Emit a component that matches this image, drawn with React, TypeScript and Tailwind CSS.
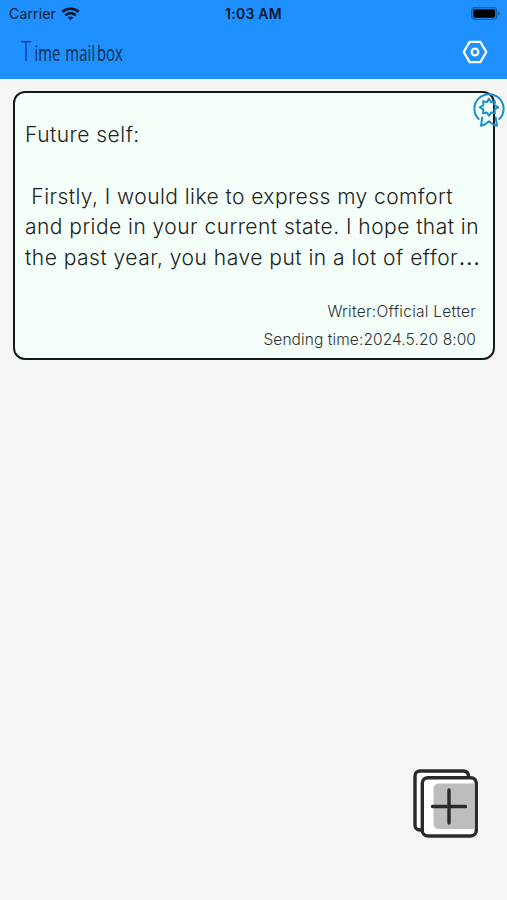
import { clsx } from 'clsx';

const LETTER_LINES = [
  { text: 'Future self:', spacing: 'tracking-[0.48px]' },
  { text: ' ', spacing: 'tracking-normal' },
  { text: ' Firstly, I would like to express my comfort', spacing: 'tracking-[0.44px]' },
  { text: 'and pride in your current state. I hope that in', spacing: 'tracking-[0.46px]' },
  { text: 'the past year, you have put in a lot of effor', spacing: 'tracking-[0.5px]', clipped: true },
];

function WifiIcon() {
  return (
    <svg width="19" height="14" viewBox="0 0 18 14" fill="none" stroke="#06182c" strokeWidth="2.7">
      <path d="M.8 4.8C5.3.7 12.7.7 17.2 4.8" />
      <path d="M3.8 8.2c3-2.6 7.4-2.6 10.400 0" />
      <path d="M6.400 10.400c1.500-1.300 3.700-1.300 5.200 0L9 13.200z" fill="#06182c" stroke="none" />
    </svg>
  );
}

function BatteryIcon() {
  return (
    <svg width="30" height="13" viewBox="0 0 30 13" fill="none">
      <rect x=".7" y=".7" width="25" height="11.6" rx="3.2" stroke="#115ba5" strokeWidth="1.2" />
      <rect x="2.2" y="2.2" width="22" height="8.6" rx="1.8" fill="#000" />
      <path d="M27.2 4.5c2 .6 2 3.4 0 4z" fill="#115ba5" />
    </svg>
  );
}

function SettingsIcon() {
  return (
    <svg width="26" height="24" viewBox="0 0 26 24" fill="none" stroke="#fff" strokeWidth="2.3" strokeLinejoin="round">
      <path d="M7.6 1.8h10.8L24.3 12l-5.9 10.2H7.6L1.7 12z" />
      <circle cx="13" cy="12" r="3.3" />
    </svg>
  );
}

function BadgeIcon() {
  return (
    <svg width="34" height="36" viewBox="0 0 34 36" fill="none" stroke="#1c8fcd" strokeWidth="2" strokeLinejoin="round" strokeLinecap="round">
      <path d="M6.6 27A14.6 14.6 0 1 1 27.4 27" />
      <path d="M17 6.800l2.100 3.300 3.800-.9-.3 4 3.600 2.100-3.600 2 .3 4-3.800-.8-2.100 3.200-2.100-3.200-3.800.8.3-4-3.600-2 3.600-2.100-.3-4 3.800.9z" />
      <path d="M10.2 25.5L9 33.800l3.800-1.300L17 29.400l4.200 3.100L25 33.800l-1.200-8.300" />
    </svg>
  );
}

function NewLetterIcon() {
  return (
    <svg width="66" height="70" viewBox="0 0 66 70" fill="none" stroke="#2a2a2a" strokeWidth="3.4" strokeLinecap="round" strokeLinejoin="round">
      <path d="M55.5 7C55.2 3.700 53.500 2 50.500 2H7C4 2 2 4 2 7V56c0 3 2 5 5 5h1.500" fill="#fff" />
      <rect x="9.300" y="8.700" width="54" height="58.300" rx="5.500" fill="#fff" />
      <path d="M26 14.500h35.500V60H26c-3.500 0-5.500-2-5.500-5.500V20C20.500 16.500 22.500 14.500 26 14.500z" fill="#bdbdbd" stroke="none" />
      <path d="M36 21v33M19.500 37.500h33" />
    </svg>
  );
}

export default function App() {
  return (
    <div className="flex h-[900px] w-[507px] flex-col overflow-hidden bg-[#f5f5f5] font-['Inter',sans-serif]">
      <header className="h-[79px] bg-[#1e90ff] text-[#06182c]">
        <div className="grid h-[27px] grid-cols-3 items-center pl-[9px] pr-[6px]">
          <div className="flex items-center gap-[5px]">
            <span className="text-[14px] tracking-[0.15px]">Carrier</span>
            <WifiIcon />
          </div>
          <span className="-ml-[3px] text-center text-[14px] font-semibold tracking-[0.25px]">1:03 AM</span>
          <div className="flex justify-end">
            <BatteryIcon />
          </div>
        </div>
        <div className="flex h-[51px] items-center justify-between pl-[21px] pr-[19px]">
          <h1 className="-mt-[6px] flex origin-left scale-x-[0.69] items-baseline whitespace-nowrap font-['Open_Sans',sans-serif] text-[21.5px] leading-none text-[#0a2c52]">
            <span className="text-[28px] font-light">T</span>
            <span className="ml-[5px]">ime</span>
            <span className="ml-[7px] tracking-[0.3px]">mail</span>
            <span className="ml-[2px]">box</span>
          </h1>
          <button className="-mt-px" aria-label="Settings">
            <SettingsIcon />
          </button>
        </div>
      </header>

      <main className="flex-1 px-[13px] pt-3">
        <article className="relative flex h-[269px] w-[482px] flex-col justify-between rounded-[12px] border-2 border-[#151a18] bg-[#f5fffa] pb-1 pl-[10px] pr-[12px] pt-[27px]">
          <div className="text-[21px] font-light leading-[30.8px] text-[#1c2220]">
            {LETTER_LINES.map((line, i) => (
              <p key={i} className={clsx('h-[30.8px] whitespace-pre', line.spacing)}>
                {line.text}
                {line.clipped && <span className="text-[26px] leading-none">…</span>}
              </p>
            ))}
          </div>
          <div className="pr-[5px] text-right text-[15.5px] font-light leading-[28px] text-[#2d3331]">
            <p className="tracking-[0.27px]">Writer:Official Letter</p>
            <p className="tracking-[0.09px]">Sending time:2024.5.20 8:00</p>
          </div>
          <div className="absolute -right-[12.5px] -top-[1px]">
            <BadgeIcon />
          </div>
        </article>
      </main>

      <div className="flex justify-end pb-[61px] pr-7">
        <button aria-label="New letter">
          <NewLetterIcon />
        </button>
      </div>
    </div>
  );
}
